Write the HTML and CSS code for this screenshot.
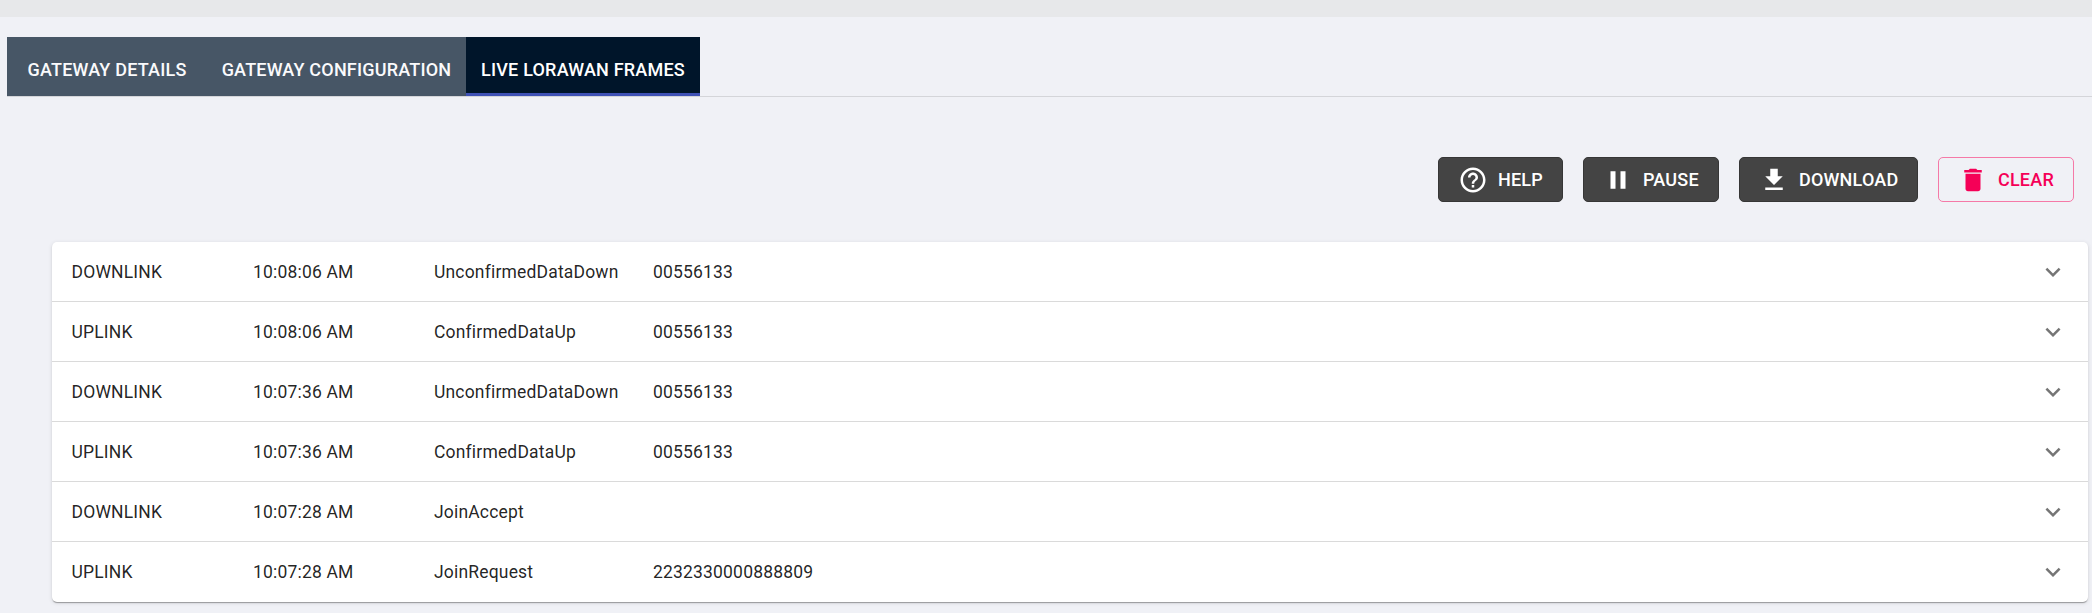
FILE: index.html
```html
<!DOCTYPE html>
<html lang="en">
<head>
<meta charset="utf-8">
<title>Gateway</title>
<link rel="stylesheet" href="styles.css">
</head>
<body>
<div class="topbar"></div>
<nav class="tabs">
  <div class="tab tab-wide">GATEWAY DETAILS</div>
  <div class="tab tab-config">GATEWAY CONFIGURATION</div>
  <div class="tab tab-active">LIVE LORAWAN FRAMES</div>
</nav>
<div class="actions">
  <button class="btn btn-help"><svg class="icon" viewBox="0 0 24 24"><path d="M11 18h2v-2h-2v2zm1-16C6.48 2 2 6.480 2 12s4.480 10 10 10 10-4.480 10-10S17.520 2 12 2zm0 18c-4.410 0-8-3.590-8-8s3.590-8 8-8 8 3.590 8 8-3.590 8-8 8zm0-14c-2.210 0-4 1.790-4 4h2c0-1.100.9-2 2-2s2 .9 2 2c0 2-3 1.750-3 5h2c0-2.250 3-2.500 3-5 0-2.210-1.790-4-4-4z"/></svg>HELP</button>
  <button class="btn btn-pause"><svg class="icon" viewBox="0 0 24 24"><path d="M6 19h4V5H6v14zm8-14v14h4V5h-4z"/></svg>PAUSE</button>
  <button class="btn btn-download"><svg class="icon" viewBox="0 0 24 24"><path d="M19 9h-4V3H9v6H5l7 7 7-7zM5 18v2h14v-2H5z"/></svg>DOWNLOAD</button>
  <button class="btn btn-clear"><svg class="icon" viewBox="0 0 24 24"><path d="M6 19c0 1.100.9 2 2 2h8c1.100 0 2-.9 2-2V7H6v12zM19 4h-3.500l-1-1h-5l-1 1H5v2h14V4z"/></svg>CLEAR</button>
</div>
<main class="frames">
  <div class="row"><span>DOWNLINK</span><span>10:08:06 AM</span><span>UnconfirmedDataDown</span><span>00556133</span><svg class="chevron" viewBox="0 0 24 24"><path d="M16.590 8.590L12 13.170 7.410 8.590 6 10l6 6 6-6z"/></svg></div>
  <div class="row"><span>UPLINK</span><span>10:08:06 AM</span><span>ConfirmedDataUp</span><span>00556133</span><svg class="chevron" viewBox="0 0 24 24"><path d="M16.590 8.590L12 13.170 7.410 8.590 6 10l6 6 6-6z"/></svg></div>
  <div class="row"><span>DOWNLINK</span><span>10:07:36 AM</span><span>UnconfirmedDataDown</span><span>00556133</span><svg class="chevron" viewBox="0 0 24 24"><path d="M16.590 8.590L12 13.170 7.410 8.590 6 10l6 6 6-6z"/></svg></div>
  <div class="row"><span>UPLINK</span><span>10:07:36 AM</span><span>ConfirmedDataUp</span><span>00556133</span><svg class="chevron" viewBox="0 0 24 24"><path d="M16.590 8.590L12 13.170 7.410 8.590 6 10l6 6 6-6z"/></svg></div>
  <div class="row"><span>DOWNLINK</span><span>10:07:28 AM</span><span>JoinAccept</span><span></span><svg class="chevron" viewBox="0 0 24 24"><path d="M16.590 8.590L12 13.170 7.410 8.590 6 10l6 6 6-6z"/></svg></div>
  <div class="row"><span>UPLINK</span><span>10:07:28 AM</span><span>JoinRequest</span><span>2232330000888809</span><svg class="chevron" viewBox="0 0 24 24"><path d="M16.590 8.590L12 13.170 7.410 8.590 6 10l6 6 6-6z"/></svg></div>
</main>
</body>
</html>
```

FILE: styles.css
```css
* { box-sizing: border-box; }
body {
  margin: 0;
  height: 613px;
  overflow: hidden;
  background: #f0f1f6;
  font-family: Roboto, "Liberation Sans", sans-serif;
  font-size: 17.5px;
  color: rgba(0, 0, 0, 0.87);
}
.topbar { height: 17px; background: #e7e8ea; }
.tabs {
  display: flex;
  height: 60px;
  margin: 20px 0 0 7px;
  border-bottom: 1px solid #d4d5d9;
}
.tab {
  display: flex;
  align-items: center;
  justify-content: center;
  height: 59px;
  padding: 6px 0 0;
  background: #00152a;
  color: #fff;
  font-size: 18px;
  font-weight: 500;
  letter-spacing: 0.2px;
  white-space: nowrap;
  opacity: 0.7;
}
.tab-wide { width: 200px; }
.tab-config { width: 259px; }
.tab-active {
  opacity: 1;
  width: 234px;
  border-bottom: 3px solid #3f51b5;
  padding-top: 9px;
}
.actions {
  display: flex;
  justify-content: flex-end;
  gap: 20px;
  margin: 60px 18px 0 0;
}
.btn {
  display: flex;
  align-items: center;
  height: 45px;
  padding: 0 0 0 19px;
  border: 1px solid #363636;
  border-radius: 5px;
  background: #444;
  color: #fff;
  font: 500 18px Roboto, "Liberation Sans", sans-serif;
  letter-spacing: 0.2px;
}
.btn-help { width: 125px; }
.btn-pause { width: 136px; }
.btn-download { width: 179px; }
.btn-clear {
  width: 136px;
  border-color: #f579a7;
  background: transparent;
  color: #f50057;
}
.icon { width: 30px; height: 30px; margin-right: 10px; fill: currentColor; }
.frames {
  margin: 40px 4px 0 52px;
  border-radius: 5px;
  background: #fff;
  box-shadow: 0 2px 1px -1px rgba(0, 0, 0, 0.2), 0 1px 1px 0 rgba(0, 0, 0, 0.14), 0 1px 4px 0 rgba(0, 0, 0, 0.12);
}
.row {
  display: grid;
  grid-template-columns: 181.5px 181px 219px 1fr 30px;
  align-items: center;
  height: 60px;
  padding: 0 20px 0 19.5px;
  border-bottom: 1px solid #dadada;
  letter-spacing: 0.18px;
}
.row:last-child { border-bottom-color: transparent; }
.chevron { width: 30px; height: 30px; fill: #757575; }
```
